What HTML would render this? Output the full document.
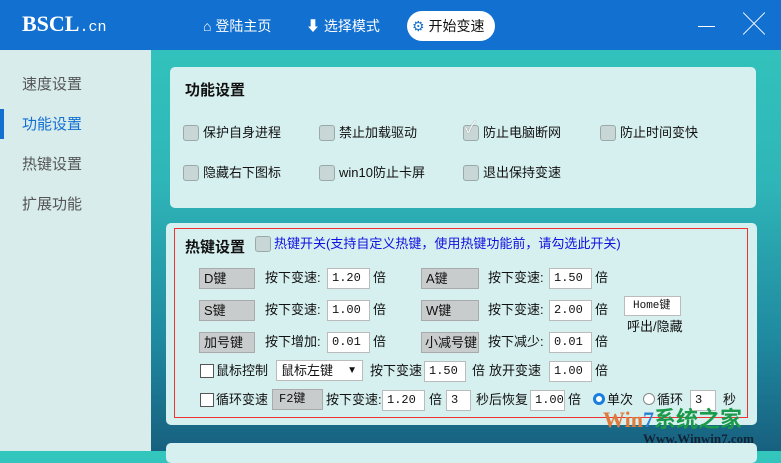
<!DOCTYPE html><html><head><meta charset="utf-8"><style>
*{margin:0;padding:0;box-sizing:border-box}
body{width:781px;height:451px;overflow:hidden;position:relative;font-family:"Liberation Sans","Noto Sans CJK SC",sans-serif;font-size:13px;color:#111;background:linear-gradient(180deg,#33c6bd 0%,#2fb6b8 40%,#1f8aa0 75%,#17607f 100%)}
.a{position:absolute;white-space:nowrap}
#hdr{left:0;top:0;width:781px;height:50px;background:#1270d1}
#side{left:0;top:50px;width:151px;height:401px;background:#d8ecec}
.pan{background:#d6efef;border-radius:5px}
.cb{position:absolute;width:16px;height:16px;border:1px solid #9aaaaa;border-radius:3px;background:#c8d6d6}
.cw{position:absolute;width:14px;height:14px;border:1px solid #555;background:#fff}
.key{position:absolute;height:21px;background:#c9cccc;border:1px solid #aaa;font-size:13px;line-height:19px;padding-left:4px;overflow:hidden}
.in{position:absolute;height:21px;background:#fff;border:1px solid #bbb;font-size:12px;line-height:19px;padding-left:4px;font-family:"Liberation Mono",monospace;overflow:hidden}
.t{position:absolute;white-space:nowrap;line-height:16px}
</style></head><body>
<div class="a" id="hdr"></div>
<div class="a" style="left:22px;top:11px;color:#fff;font-family:'Liberation Serif',serif;font-size:22px;font-weight:bold">BSCL<span style="font-size:15px;font-weight:normal;font-family:'Liberation Mono',monospace">.cn</span></div>
<div class="a" style="left:203px;top:16px;color:#fff;font-size:14px">⌂ 登陆主页</div>
<div class="a" style="left:306px;top:16px;color:#fff;font-size:14px">⬇ 选择模式</div>
<div class="a" style="left:407px;top:11px;width:88px;height:30px;background:#fff;border-radius:15px;color:#1270d1;font-size:14px;line-height:30px;padding-left:5px">⚙ <span style="color:#111">开始变速</span></div>
<div class="a" style="left:698px;top:26px;width:17px;height:1px;background:#fff"></div>
<div class="a" style="left:743px;top:13px;color:#fff;font-size:22px;line-height:24px">╳</div>
<div class="a" id="side"></div>
<div class="a" style="left:0;top:109px;width:4px;height:30px;background:#1270d1"></div>
<div class="a" style="left:22px;top:73px;font-size:15px;color:#555">速度设置</div>
<div class="a" style="left:22px;top:113px;font-size:15px;color:#1270d1">功能设置</div>
<div class="a" style="left:22px;top:153px;font-size:15px;color:#555">热键设置</div>
<div class="a" style="left:22px;top:193px;font-size:15px;color:#555">扩展功能</div>
<div class="a pan" style="left:170px;top:67px;width:586px;height:141px"></div>
<div class="a" style="left:185px;top:79px;font-size:15px;font-weight:bold">功能设置</div>
<div class="cb" style="left:183px;top:125px"></div><div class="t" style="left:203px;top:125px">保护自身进程</div>
<div class="cb" style="left:319px;top:125px"></div><div class="t" style="left:339px;top:125px">禁止加载驱动</div>
<div class="cb" style="left:463px;top:125px"></div><div class="t" style="left:465px;top:121px;font-size:16px;color:#fff;text-shadow:0 0 1px #666">✓</div><div class="t" style="left:483px;top:125px">防止电脑断网</div>
<div class="cb" style="left:600px;top:125px"></div><div class="t" style="left:620px;top:125px">防止时间变快</div>
<div class="cb" style="left:183px;top:165px"></div><div class="t" style="left:203px;top:165px">隐藏右下图标</div>
<div class="cb" style="left:319px;top:165px"></div><div class="t" style="left:339px;top:165px">win10防止卡屏</div>
<div class="cb" style="left:463px;top:165px"></div><div class="t" style="left:483px;top:165px">退出保持变速</div>
<div class="a pan" style="left:166px;top:223px;width:591px;height:202px"></div>
<div class="a" style="left:174px;top:228px;width:574px;height:190px;border:1px solid #e33"></div>
<div class="a" style="left:185px;top:236px;font-size:15px;font-weight:bold">热键设置</div>
<div class="cb" style="left:255px;top:236px"></div>
<div class="t" style="left:274px;top:236px;color:#1010e0">热键开关(支持自定义热键，使用热键功能前，请勾选此开关)</div>
<div class="key" style="left:199px;top:268px;width:56px">D键</div><div class="t" style="left:265px;top:270px">按下变速:</div><div class="in" style="left:327px;top:268px;width:43px">1.20</div><div class="t" style="left:373px;top:270px">倍</div>
<div class="key" style="left:421px;top:268px;width:58px">A键</div><div class="t" style="left:488px;top:270px">按下变速:</div><div class="in" style="left:549px;top:268px;width:43px">1.50</div><div class="t" style="left:595px;top:270px">倍</div>
<div class="key" style="left:199px;top:300px;width:56px">S键</div><div class="t" style="left:265px;top:302px">按下变速:</div><div class="in" style="left:327px;top:300px;width:43px">1.00</div><div class="t" style="left:373px;top:302px">倍</div>
<div class="key" style="left:421px;top:300px;width:58px">W键</div><div class="t" style="left:488px;top:302px">按下变速:</div><div class="in" style="left:549px;top:300px;width:43px">2.00</div><div class="t" style="left:595px;top:302px">倍</div>
<div class="in" style="left:624px;top:296px;width:57px;height:20px;padding-left:8px;font-size:11px;line-height:18px">Home键</div><div class="t" style="left:627px;top:319px">呼出/隐藏</div>
<div class="key" style="left:199px;top:332px;width:56px">加号键</div><div class="t" style="left:265px;top:334px">按下增加:</div><div class="in" style="left:327px;top:332px;width:43px">0.01</div><div class="t" style="left:373px;top:334px">倍</div>
<div class="key" style="left:421px;top:332px;width:58px;padding-left:3px">小减号键</div><div class="t" style="left:488px;top:334px">按下减少:</div><div class="in" style="left:549px;top:332px;width:43px">0.01</div><div class="t" style="left:595px;top:334px">倍</div>
<div class="cw" style="left:200px;top:364px"></div><div class="t" style="left:216px;top:363px">鼠标控制</div>
<div class="in" style="left:276px;top:360px;width:87px;font-family:'Liberation Sans','Noto Sans CJK SC',sans-serif;font-size:13px">鼠标左键 <span style="position:absolute;right:5px;font-size:10px">▼</span></div>
<div class="t" style="left:370px;top:363px">按下变速</div><div class="in" style="left:424px;top:361px;width:42px">1.50</div><div class="t" style="left:472px;top:363px">倍</div>
<div class="t" style="left:489px;top:363px">放开变速</div><div class="in" style="left:549px;top:361px;width:43px">1.00</div><div class="t" style="left:595px;top:363px">倍</div>
<div class="cw" style="left:200px;top:393px"></div><div class="t" style="left:216px;top:392px">循环变速</div>
<div class="key" style="left:272px;top:389px;width:51px;font-family:'Liberation Mono','Noto Sans CJK SC',monospace;font-size:12px;padding-left:6px">F2键</div>
<div class="t" style="left:326px;top:392px">按下变速:</div><div class="in" style="left:382px;top:390px;width:43px">1.20</div><div class="t" style="left:429px;top:392px">倍</div>
<div class="in" style="left:446px;top:390px;width:25px">3</div><div class="t" style="left:476px;top:392px">秒后恢复</div><div class="in" style="left:530px;top:390px;width:35px">1.00</div><div class="t" style="left:568px;top:392px">倍</div>
<div class="a" style="left:593px;top:393px;width:12px;height:12px;border-radius:50%;border:3px solid #1a7de0;background:#fff"></div><div class="t" style="left:607px;top:392px">单次</div>
<div class="a" style="left:643px;top:393px;width:12px;height:12px;border-radius:50%;border:1px solid #888;background:#fff"></div><div class="t" style="left:657px;top:392px">循环</div>
<div class="in" style="left:690px;top:390px;width:26px">3</div><div class="t" style="left:723px;top:392px">秒</div>
<div class="a pan" style="left:166px;top:443px;width:591px;height:20px"></div>
<div class="a" style="left:603px;top:402px;font-family:'Liberation Serif',serif;font-size:22px;font-weight:bold;color:#e07a3a">Win<span style="color:#2a80d0">7</span><span style="color:#1a9a4a;font-family:'Noto Sans CJK SC',sans-serif">系统之家</span></div>
<div class="a" style="left:643px;top:431px;font-family:'Liberation Serif',serif;font-size:13px;font-weight:bold;color:#123">Www.Winwin7.com</div>
</body></html>
